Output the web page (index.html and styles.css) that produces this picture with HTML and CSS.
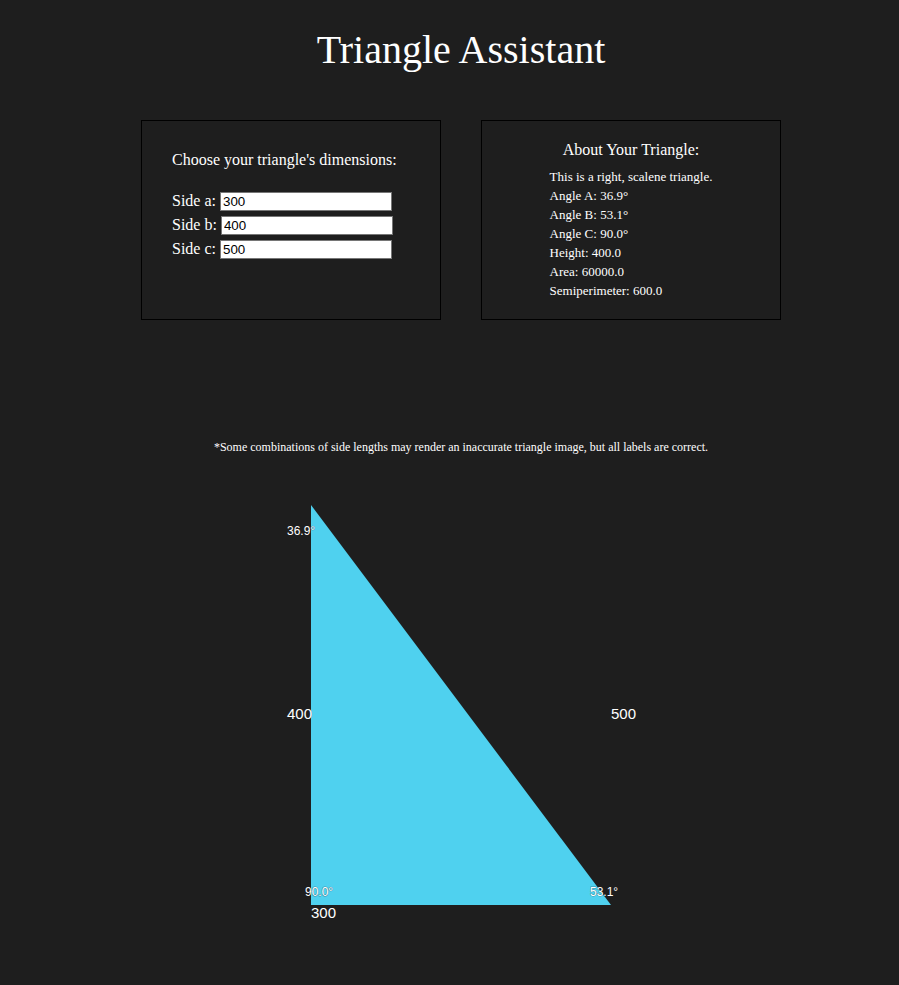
FILE: index.html
```html
<!DOCTYPE html>
<html lang="en">
<head>
<meta charset="utf-8">
<title>Triangle Assistant</title>
<link rel="stylesheet" href="styles.css">
</head>
<body>
<div class="top">
  <h1 class="title">Triangle Assistant</h1>
  <div class="panels">
    <section class="panel panel-input">
      <div class="panel-heading">Choose your triangle's dimensions:</div>
      <div class="rows">
        <label class="row"><span class="row-label">Side a:</span><input class="side-input" type="text" value="300"></label>
        <label class="row"><span class="row-label">Side b:</span><input class="side-input" type="text" value="400"></label>
        <label class="row"><span class="row-label">Side c:</span><input class="side-input" type="text" value="500"></label>
      </div>
    </section>
    <section class="panel panel-info">
      <div class="info-heading">About Your Triangle:</div>
      <div class="info-list">
        <div class="info-line">This is a right, scalene triangle.</div>
        <div class="info-line">Angle A: 36.9°</div>
        <div class="info-line">Angle B: 53.1°</div>
        <div class="info-line">Angle C: 90.0°</div>
        <div class="info-line">Height: 400.0</div>
        <div class="info-line">Area: 60000.0</div>
        <div class="info-line">Semiperimeter: 600.0</div>
      </div>
    </section>
  </div>
  <p class="note">*Some combinations of side lengths may render an inaccurate triangle image, but all labels are correct.</p>
</div>
<svg class="figure" width="899" height="480" viewBox="0 470 899 480" xmlns="http://www.w3.org/2000/svg">
  <polygon class="tri" points="311,505 311,905 611,905"/>
  <text class="lbl-sm" x="287" y="535">36.9°</text>
  <text class="lbl-lg" x="287" y="719">400</text>
  <text class="lbl-lg" x="611" y="719">500</text>
  <text class="lbl-sm" x="305" y="896">90.0°</text>
  <text class="lbl-sm" x="590" y="896">53.1°</text>
  <text class="lbl-lg" x="311" y="918">300</text>
</svg>
</body>
</html>
```

FILE: styles.css
```css
html, body {
  margin: 0;
  padding: 0;
  background: #1e1e1e;
  color: #ffffff;
  font-family: "Liberation Serif", "Times New Roman", serif;
}

.top {
  padding-left: 23px;
}

.title {
  margin: 0;
  padding-top: 27px;
  font-size: 40px;
  line-height: 46px;
  font-weight: normal;
  text-align: center;
}

.panels {
  display: flex;
  justify-content: center;
  gap: 40px;
  margin-top: 47px;
}

.panel {
  box-sizing: border-box;
  width: 300px;
  height: 200px;
  border: 1px solid #000000;
}

.panel-input {
  padding: 30px 0 0 30px;
}

.panel-heading {
  font-size: 16px;
  line-height: 18px;
}

.rows {
  margin-top: 20px;
  display: flex;
  flex-direction: column;
}

.row {
  display: flex;
  align-items: center;
  gap: 4px;
  height: 24px;
  font-size: 16px;
  line-height: 18px;
}

.side-input {
  box-sizing: border-box;
  width: 172px;
  height: 19px;
  margin: 0;
  padding: 1px 2px;
  border: 1px solid #767676;
  background: #ffffff;
  color: #000000;
  font-family: "Liberation Sans", Arial, sans-serif;
  font-size: 13.33px;
  line-height: 15px;
}

.panel-info {
  display: flex;
  flex-direction: column;
  align-items: center;
  padding-top: 20px;
}

.info-heading {
  font-size: 16px;
  line-height: 18px;
  margin-bottom: 8px;
}

.info-list {
  font-size: 13px;
  line-height: 19px;
}

.note {
  margin: 120px 0 16px 0;
  font-size: 12px;
  line-height: 14px;
  text-align: center;
}

.figure {
  display: block;
}

.tri {
  fill: #4fd1ef;
}

.lbl-sm,
.lbl-lg {
  fill: #ffffff;
  font-family: "Liberation Sans", Arial, sans-serif;
  stroke: #1e1e1e;
  stroke-width: 1px;
  stroke-opacity: 0.4;
  paint-order: stroke;
}

.lbl-sm {
  font-size: 12px;
}

.lbl-lg {
  font-size: 15px;
}
```
